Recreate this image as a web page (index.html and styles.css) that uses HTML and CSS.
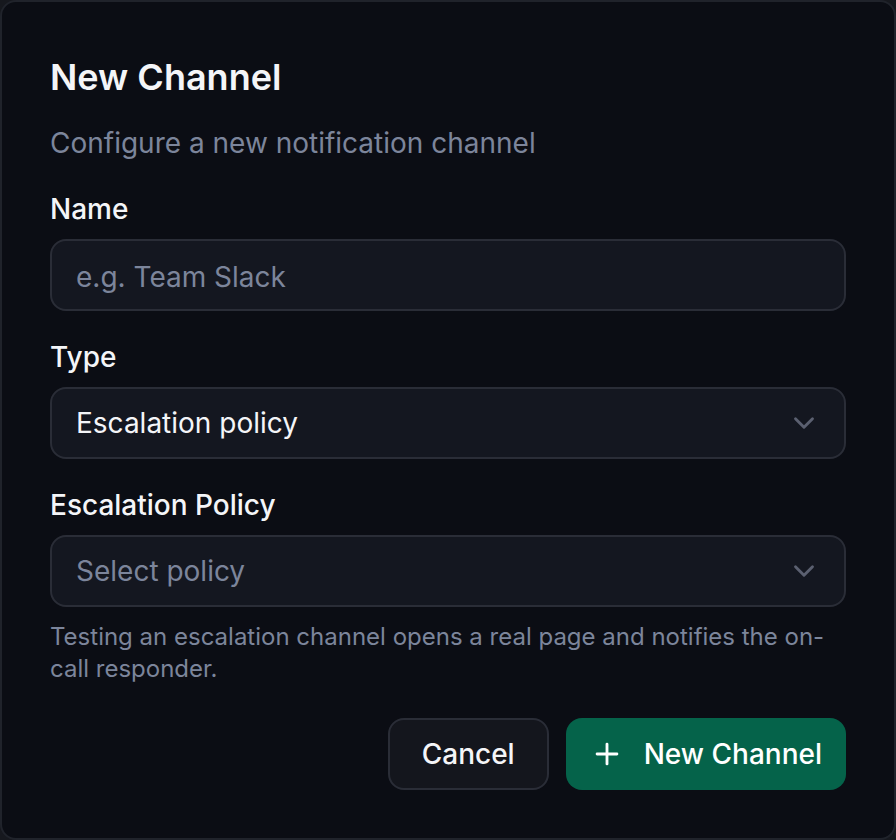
FILE: index.html
```html
<!DOCTYPE html>
<html lang="en">
<head>
  <meta charset="UTF-8" />
  <meta name="viewport" content="width=device-width, initial-scale=1.0" />
  <title>New Channel</title>
  <link rel="stylesheet" href="styles.css">
</head>
<body>

  <div class="dialog">
    <h2 class="dialog-title">New Channel</h2>
    <p class="dialog-desc">Configure a new notification channel</p>

    <div class="field">
      <label class="field-label" for="channelName">Name</label>
      <input class="text-input" id="channelName" type="text" placeholder="e.g. Team Slack" />
    </div>

    <div class="field">
      <label class="field-label">Type</label>
      <button class="select-trigger" type="button">
        <span class="select-value">Escalation policy</span>
        <svg class="chevron" viewBox="0 0 24 24" fill="none" stroke="currentColor" stroke-width="2" stroke-linecap="round" stroke-linejoin="round"><path d="m6 9 6 6 6-6"/></svg>
      </button>
    </div>

    <div class="field">
      <label class="field-label">Escalation Policy</label>
      <button class="select-trigger" type="button">
        <span class="select-value placeholder">Select policy</span>
        <svg class="chevron" viewBox="0 0 24 24" fill="none" stroke="currentColor" stroke-width="2" stroke-linecap="round" stroke-linejoin="round"><path d="m6 9 6 6 6-6"/></svg>
      </button>
      <p class="field-hint">Testing an escalation channel opens a real page and notifies the on-call responder.</p>
    </div>

    <div class="dialog-footer">
      <button class="btn btn-outline" type="button">Cancel</button>
      <button class="btn btn-primary" type="button">
        <svg class="btn-icon" viewBox="0 0 24 24" fill="none" stroke="currentColor" stroke-width="2" stroke-linecap="round" stroke-linejoin="round"><path d="M5 12h14"/><path d="M12 5v14"/></svg>
        New Channel
      </button>
    </div>
  </div>

</body>
</html>
```

FILE: styles.css
```css
:root {
  --bg: #0b0d14;
  --surface: #141720;
  --border: #2a2d37;
  --text: #f4f5f8;
  --muted: #7c859b;
  --primary: #05634a;
  --font: 'Inter', 'Noto Sans', sans-serif;
}

* {
  box-sizing: border-box;
}

html,
body {
  margin: 0;
  height: 100%;
  background: #16181e;
}

body {
  font-family: var(--font);
  color: var(--text);
}

.dialog {
  height: 840px;
  width: 896px;
  background: var(--bg);
  border: 2px solid #20232b;
  border-radius: 16px;
  padding: 48px;
  display: flex;
  flex-direction: column;
}

.dialog-title {
  margin: 0;
  font-size: 36px;
  line-height: 54px;
  font-weight: 600;
}

.dialog-desc {
  margin: 19px 0 0;
  font-size: 28px;
  line-height: 40px;
  color: var(--muted);
}

.field {
  margin-top: 32px;
  display: flex;
  flex-direction: column;
}

.field-label {
  font-size: 28px;
  line-height: 28px;
  font-weight: 500;
  margin-bottom: 16px;
}

.text-input,
.select-trigger {
  height: 72px;
  width: 100%;
  background: var(--surface);
  border: 2px solid var(--border);
  border-radius: 16px;
  padding: 0 24px;
  font-family: var(--font);
  font-size: 28px;
  color: var(--text);
  outline: none;
}

.text-input {
  padding-top: 3px;
}

.text-input::placeholder,
.placeholder {
  color: var(--muted);
}

.select-trigger {
  display: flex;
  align-items: center;
  justify-content: space-between;
  text-align: left;
  cursor: pointer;
}

.chevron {
  width: 34px;
  height: 34px;
  color: #5b6070;
  margin-right: -1px;
}

.field-hint {
  margin: 14px 0 0;
  font-size: 24px;
  line-height: 32px;
  color: var(--muted);
}

.dialog-footer {
  margin-top: auto;
  display: flex;
  justify-content: flex-end;
  gap: 17px;
}

.btn {
  height: 72px;
  border-radius: 16px;
  font-family: var(--font);
  font-size: 28px;
  font-weight: 500;
  display: inline-flex;
  align-items: center;
  cursor: pointer;
}

.btn-outline {
  background: #14161d;
  border: 2px solid var(--border);
  color: var(--text);
  padding: 0 32px;
}

.btn-primary {
  background: var(--primary);
  border: none;
  color: #fff;
  padding: 0 24px;
  gap: 20px;
}

.btn-icon {
  width: 34px;
  height: 34px;
}
```
